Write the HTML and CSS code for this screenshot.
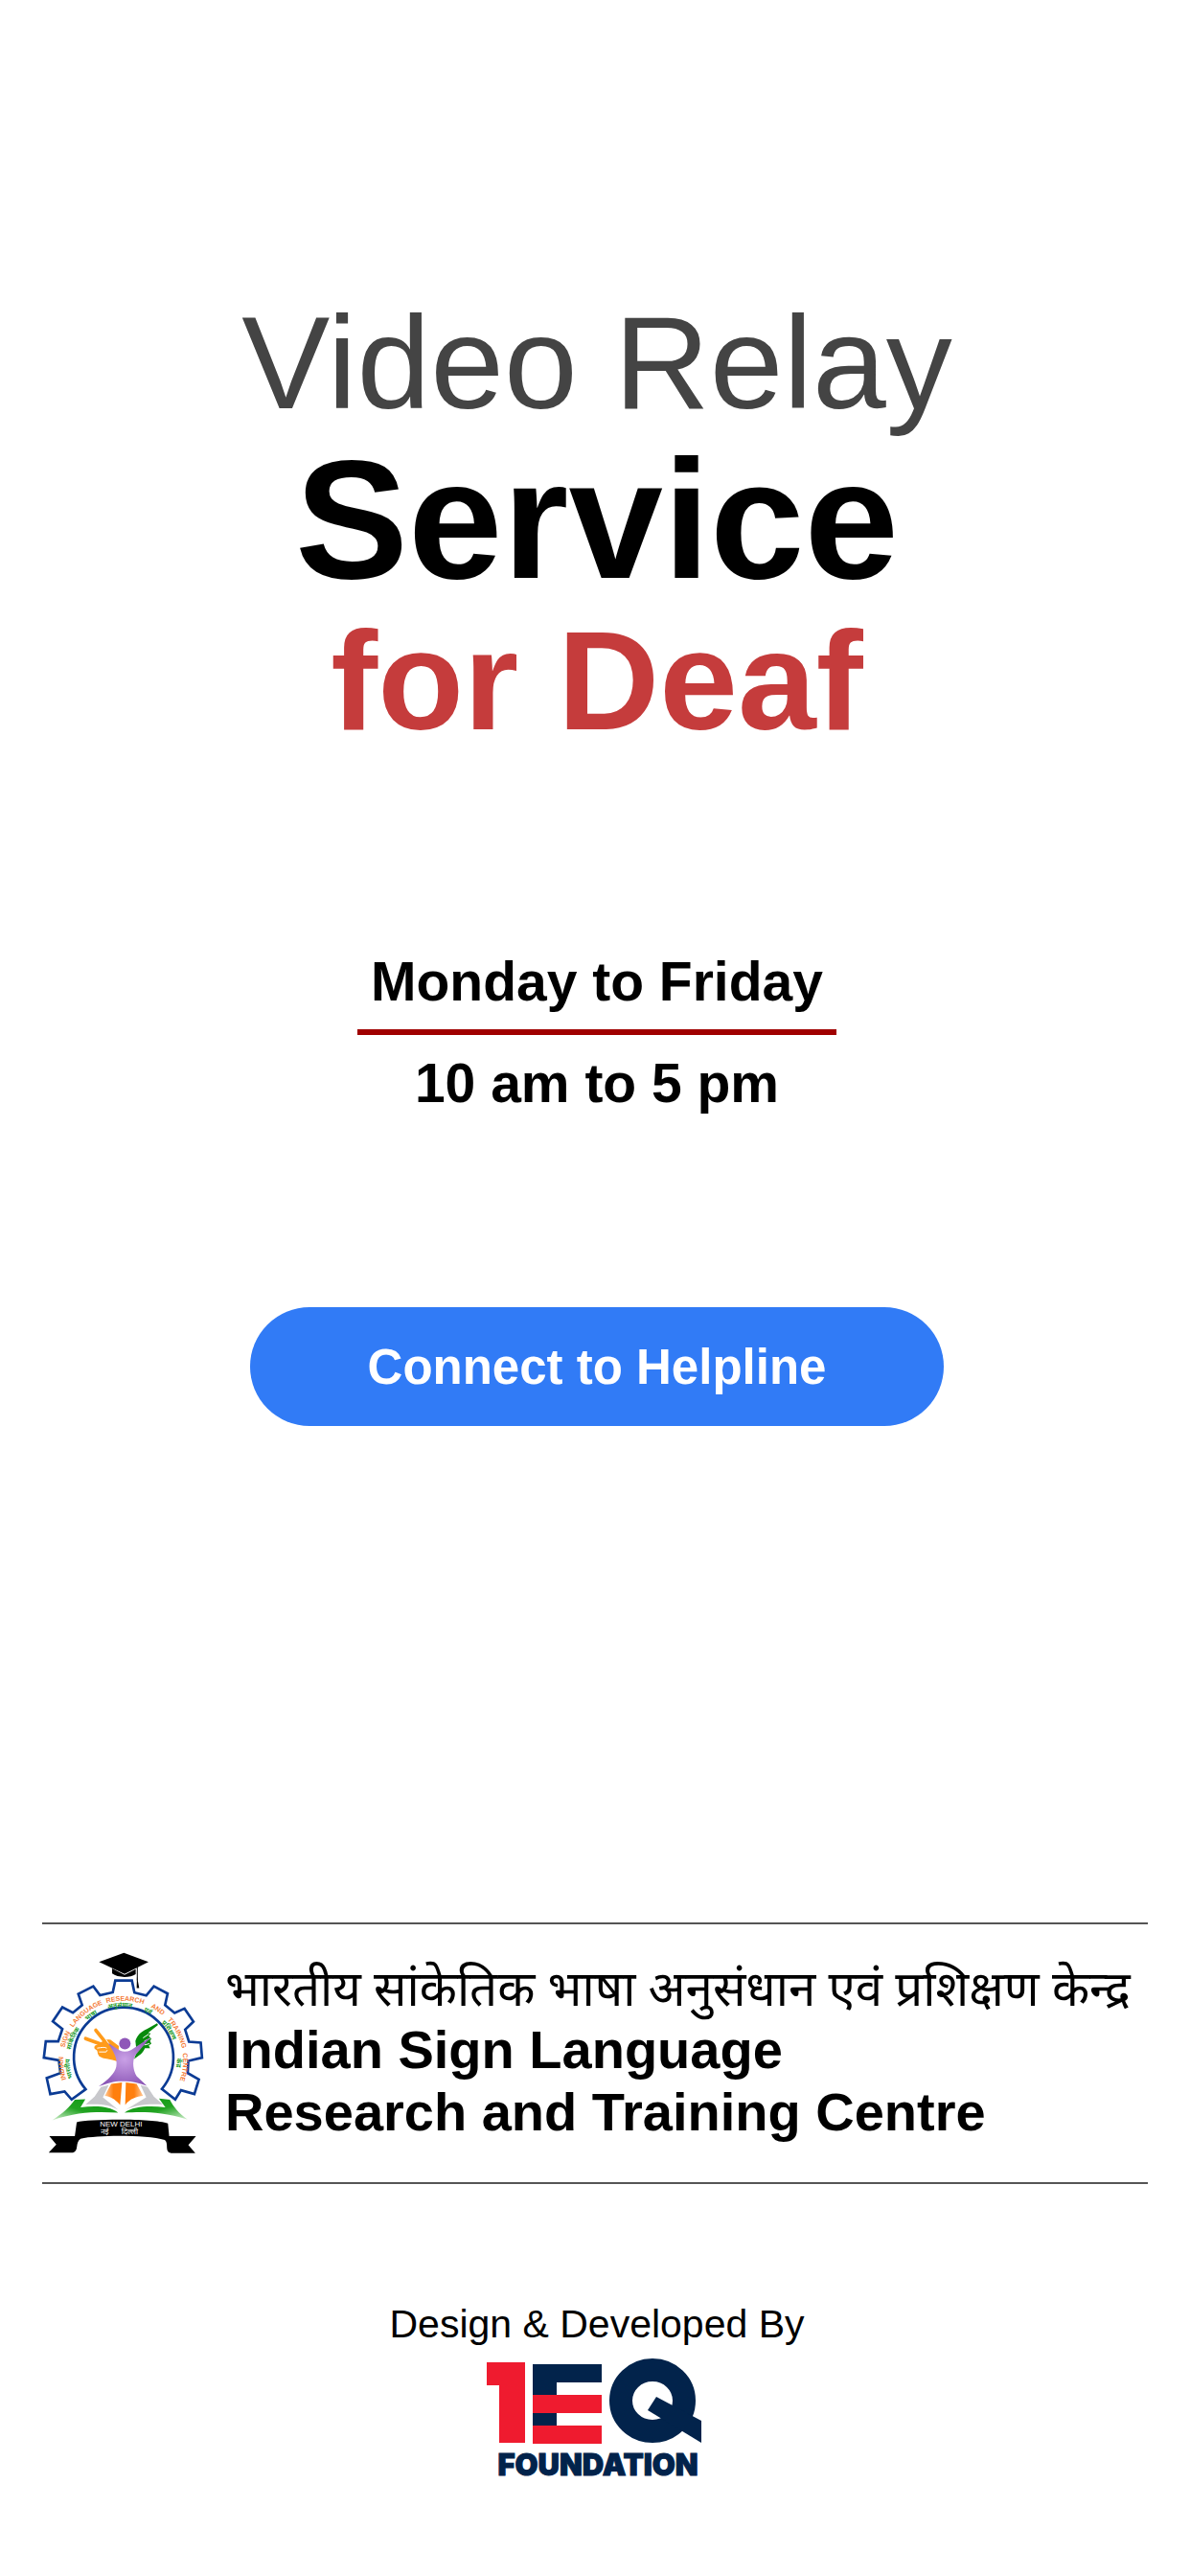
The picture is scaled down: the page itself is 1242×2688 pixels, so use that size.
FILE: index.html
```html
<!DOCTYPE html>
<html lang="en">
<head>
  <meta charset="utf-8">
  <meta name="viewport" content="width=device-width, initial-scale=1">
  <title>Video Relay Service for Deaf</title>
  <link rel="stylesheet" href="styles.css">
</head>
<body>
  <main class="hero">
    <h1 class="title">
      <span class="title-top">Video Relay</span>
      <span class="title-main">Service</span>
      <span class="title-accent">for Deaf</span>
    </h1>
    <div class="hours">
      <p class="hours-days">Monday to Friday</p>
      <p class="hours-time">10 am to 5 pm</p>
    </div>
    <button class="connect" type="button">Connect to Helpline</button>
  </main>

  <section class="centre">
    <svg class="emblem" viewBox="42 48 510 640" role="img" aria-label="Indian Sign Language Research and Training Centre emblem">
      <defs>
        <radialGradient id="body" cx="0.5" cy="0.45" r="0.6">
          <stop offset="0" stop-color="#c9a0e6"/>
          <stop offset="1" stop-color="#8a55b5"/>
        </radialGradient>
        <linearGradient id="leafLeft" x1="0" y1="1" x2="1" y2="0">
          <stop offset="0" stop-color="#d5f0d2"/>
          <stop offset="0.45" stop-color="#21a321"/>
          <stop offset="1" stop-color="#0b960f"/>
        </linearGradient>
        <linearGradient id="leafRight" x1="1" y1="1" x2="0" y2="0">
          <stop offset="0" stop-color="#d5f0d2"/>
          <stop offset="0.45" stop-color="#21a321"/>
          <stop offset="1" stop-color="#0b960f"/>
        </linearGradient>
        <linearGradient id="pageLeft" x1="0" y1="0" x2="1" y2="0">
          <stop offset="0" stop-color="#ffc999"/>
          <stop offset="0.5" stop-color="#ff7f0e"/>
        </linearGradient>
        <linearGradient id="pageRight" x1="1" y1="0" x2="0" y2="0">
          <stop offset="0" stop-color="#ffc999"/>
          <stop offset="0.5" stop-color="#ff7f0e"/>
        </linearGradient>
        <path id="outerArc" d="M118 452A188 188 0 1 1 468 467"/>
        <path id="innerArc" d="M137 446A168 168 0 1 1 454 447"/>
      </defs>
      <path fill="#fff" stroke="#0b3b94" stroke-width="8" d="M178 481L134 513L112 488L67 496L56 446L99 430L94 390L47 382L53 331L92 331L105 292L75 268L105 224L138 241L167 217L155 182L202 158L223 186L263 177L271 140H323L331 178L368 187L392 158L435 181L427 217L457 242L488 228L516 269L490 294L502 332L539 335L543 382L500 392L498 430L533 450L519 496L477 484L459 513L417 480A156 156 0 1 0 178 481Z"/>
      <g class="ring-en">
        <text><textPath href="#outerArc" startOffset="2">INDIAN</textPath></text>
        <text><textPath href="#outerArc" startOffset="103">SIGN</textPath></text>
        <text><textPath href="#outerArc" startOffset="171">LANGUAGE</textPath></text>
        <text><textPath href="#outerArc" startOffset="304">RESEARCH</textPath></text>
        <text><textPath href="#outerArc" startOffset="446">AND</textPath></text>
        <text><textPath href="#outerArc" startOffset="512">TRAINING</textPath></text>
        <text><textPath href="#outerArc" startOffset="629">CENTRE</textPath></text>
      </g>
      <g class="ring-hi">
        <text><textPath href="#innerArc" startOffset="0">भारतीय</textPath></text>
        <text><textPath href="#innerArc" startOffset="90">सांकेतिक</textPath></text>
        <text><textPath href="#innerArc" startOffset="196">भाषा</textPath></text>
        <text><textPath href="#innerArc" startOffset="272">अनुसंधान</textPath></text>
        <text><textPath href="#innerArc" startOffset="386">एवं</textPath></text>
        <text><textPath href="#innerArc" startOffset="453">प्रशिक्षण</textPath></text>
        <text><textPath href="#innerArc" startOffset="577">केंद्र</textPath></text>
      </g>
      <path d="M220 82L298 53L375 82L300 119Z"/>
      <path d="M261 102L300 122L335 104V120C318 132 278 132 261 118Z"/>
      <path fill="none" stroke="#000" stroke-width="3" d="M310 85L340 99V140"/>
      <path d="M339 128L346 164H338Z"/>
      <g fill="#ff9b1a" stroke="#ff9b1a" stroke-linecap="round" stroke-linejoin="round">
        <path fill="none" stroke-width="11" d="M210 296L245 340M178 322L238 344"/>
        <path stroke-width="4" d="M214 344C232 330 246 324 256 328L280 346L278 392C256 382 236 386 222 376C212 366 222 360 212 356C204 352 206 346 214 344Z"/>
      </g>
      <path fill="none" stroke="#fff" stroke-width="3" d="M214 352C228 350 238 348 244 352M220 364H242L246 358M242 326L254 342"/>
      <path fill="#078a0c" d="M338 364L334 330C340 310 352 300 370 292L402 274L405 279L374 304L382 306L376 314L384 322L380 330L384 338L376 344L380 352L364 352C356 370 346 374 330 386Z"/>
      <path fill="none" stroke="#fff" stroke-width="3" d="M376 308L358 320M380 322L362 330M378 338L362 342"/>
      <circle cx="301" cy="338" r="18" fill="#8f57b8"/>
      <path fill="url(#body)" d="M248 336L286 360Q302 366 320 358L382 318L334 374C322 394 328 424 338 440L370 470C344 462 324 456 302 456C272 454 250 460 219 472C250 450 270 430 274 410C278 388 270 370 248 336Z"/>
      <path fill="#c8c8cc" d="M206 504L226 474L250 468L232 506L280 545C250 530 226 526 178 529Z"/>
      <path fill="#c8c8cc" d="M392 504L372 474L350 468L368 506L304 545C340 530 372 526 420 529Z"/>
      <path fill="url(#pageLeft)" d="M258 464L292 460L286 530C268 510 254 504 238 502Z"/>
      <path fill="url(#pageRight)" d="M304 460L338 464L358 502C338 504 318 510 302 530Z"/>
      <path fill="url(#leafLeft)" d="M73 578C106 558 130 534 144 514L177 512L162 538C210 532 252 534 280 554C224 552 160 548 73 578Z"/>
      <path fill="url(#leafRight)" d="M498 576C470 558 452 534 442 514L408 510L428 538C380 532 328 534 300 554C350 552 410 548 498 576Z"/>
      <path d="M150 584C190 574 390 572 436 588L440 628H524L500 656L522 681H446C424 678 440 650 426 640C370 624 220 624 162 636C144 648 158 674 138 680H62L86 654L64 628H144Z"/>
      <g class="ribbon">
        <text x="289" y="598">NEW DELHI</text>
        <text x="238" y="622">नई</text>
        <text x="316" y="622">दिल्ली</text>
      </g>
    </svg>
    <div class="centre-name">
      <p class="name-hi" lang="hi">भारतीय सांकेतिक भाषा अनुसंधान एवं प्रशिक्षण केन्द्र</p>
      <p class="name-en">Indian Sign Language<br>Research and Training Centre</p>
    </div>
  </section>

  <footer class="credit">
    <p class="credit-label">Design &amp; Developed By</p>
    <svg class="credit-logo" viewBox="0 0 226 136" role="img" aria-label="1EQ Foundation">
      <g fill="#ef1b2f">
        <rect x="0" y="5" width="40" height="24"/>
        <rect x="13" y="5" width="27" height="84"/>
      </g>
      <g fill="#02234b">
        <rect x="48" y="7" width="72" height="19"/>
        <rect x="48" y="7" width="25" height="70"/>
      </g>
      <g fill="#ef1b2f">
        <rect x="48" y="39" width="72" height="19"/>
        <rect x="48" y="71" width="72" height="19"/>
      </g>
      <ellipse cx="173" cy="45" rx="33" ry="32" fill="none" stroke="#02234b" stroke-width="24"/>
      <path fill="#02234b" d="M177 41L224 66V89L168 55Z"/>
      <text class="logo-word" x="116" y="123">FOUNDATION</text>
    </svg>
  </footer>
</body>
</html>
```
FILE: styles.css
```css
* {
  box-sizing: border-box;
}

body {
  margin: 0;
  min-height: 100vh;
  background: #fff;
  color: #000;
  font-family: "Liberation Sans", Arial, sans-serif;
}

h1,
p {
  margin: 0;
}

.hero {
  display: flex;
  flex-direction: column;
  align-items: center;
  padding: 298px 0 0 4px;
  text-align: center;
}

.title {
  display: flex;
  flex-direction: column;
  font-weight: 700;
  line-height: 168px;
}

.title-top {
  color: #444;
  font-size: 138px;
  font-weight: 400;
  line-height: 160px;
}

.title-main {
  font-size: 177px;
}

.title-accent {
  color: #c53c3c;
  font-size: 147px;
}

.hours {
  margin-top: 194px;
  font-size: 57px;
  font-weight: 700;
  line-height: 72px;
}

.hours-days {
  padding: 0 14px 14px;
  border-bottom: 6px solid #a00000;
}

.hours-time {
  padding-top: 14px;
}

.connect {
  width: 724px;
  max-width: 100%;
  height: 124px;
  margin-top: 198px;
  padding: 0;
  border: 0;
  border-radius: 62px;
  background: #317bf6;
  color: #fff;
  font: 700 51px "Liberation Sans", Arial, sans-serif;
}

.centre {
  display: flex;
  align-items: flex-start;
  gap: 21px;
  margin: 518px 44px 0;
  padding: 28px 0;
  border-top: 2px solid #555;
  border-bottom: 2px solid #555;
}

.emblem {
  flex: none;
  width: 170px;
  height: 213px;
}

.centre-name {
  padding-top: 20px;
}

.name-hi {
  font-family: "Noto Sans Devanagari", "Noto Sans", sans-serif;
  font-size: 51px;
  line-height: 50px;
  white-space: nowrap;
}

.name-en {
  font-size: 56px;
  font-weight: 700;
  line-height: 65px;
}

.ring-en {
  fill: #f47a35;
  font: 700 21px "Liberation Sans", Arial, sans-serif;
}

.ring-hi {
  fill: #1c9c2c;
  font: 700 20px "Noto Sans Devanagari", "Noto Sans", sans-serif;
}

.ribbon {
  fill: #fff;
  font: 24px "Liberation Sans", "Noto Sans", sans-serif;
  text-anchor: middle;
}

.credit {
  display: flex;
  flex-direction: column;
  align-items: center;
  padding: 122px 0 80px;
}

.credit-label {
  padding-left: 4px;
  font-size: 41px;
  line-height: 48px;
}

.credit-logo {
  width: 226px;
  height: 136px;
  margin-top: 11px;
}

.logo-word {
  fill: #02234b;
  stroke: #02234b;
  font: 900 31px Inter, sans-serif;
  text-anchor: middle;
}
```
